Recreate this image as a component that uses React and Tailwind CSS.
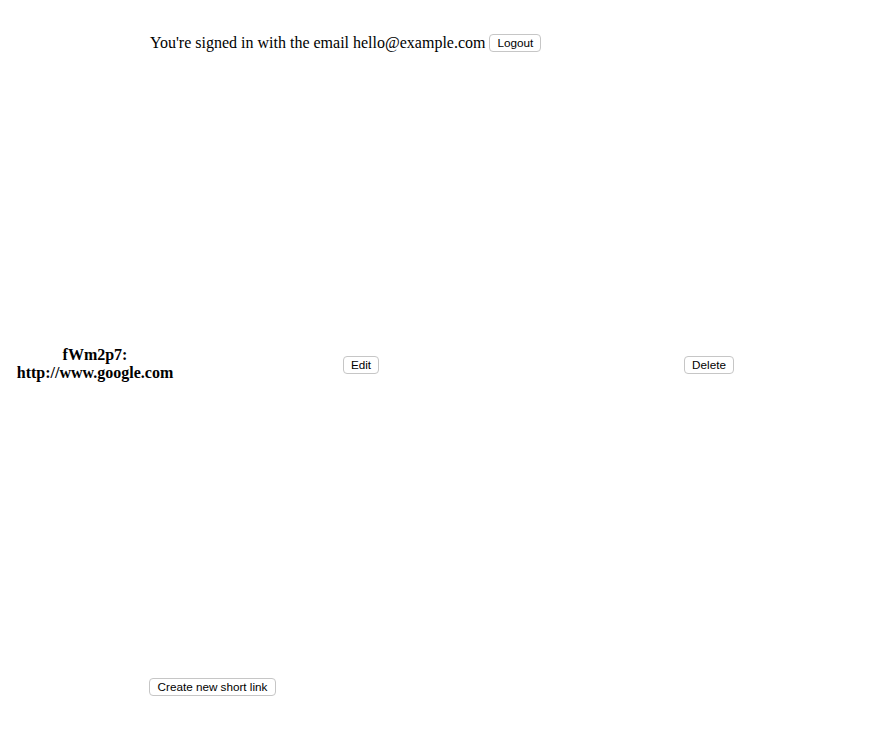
import React from 'react';

const btn =
    "inline-flex items-center justify-center whitespace-nowrap h-[18px] px-[8px] bg-white border border-[#c6c6c6] rounded-[4px] text-[11.7px] leading-none text-black font-['Liberation_Sans',Arial,sans-serif]";

export default function App() {
    return (
        <div className="min-h-screen bg-white text-black font-['Liberation_Serif','Times_New_Roman',serif] text-[16px]">
            {/* Header */}
            <div className="pt-[33px] pl-[150px] h-[52px] flex items-center leading-[18px]">
                <span>You're signed in with the email hello@example.com</span>
                <button className={btn + ' ml-[4px] w-[52px] px-0'}>Logout</button>
            </div>

            {/* Links */}
            <div className="mt-[294px] flex items-center">
                <div className="w-[190px] text-center font-bold leading-[18px]">
                    fWm2p7:
                    <br />
                    http://www.google.com
                </div>
                <button className={btn + ' ml-[153px] mt-[2px] w-[36px] px-0'}>Edit</button>
                <button className={btn + ' ml-[305px] mt-[2px] w-[50px] px-0'}>Delete</button>
            </div>

            {/* Create */}
            <div className="mt-[296px] pl-[149px] flex">
                <button className={btn + ' w-[127px] px-0'}>Create new short link</button>
            </div>
        </div>
    );
}
